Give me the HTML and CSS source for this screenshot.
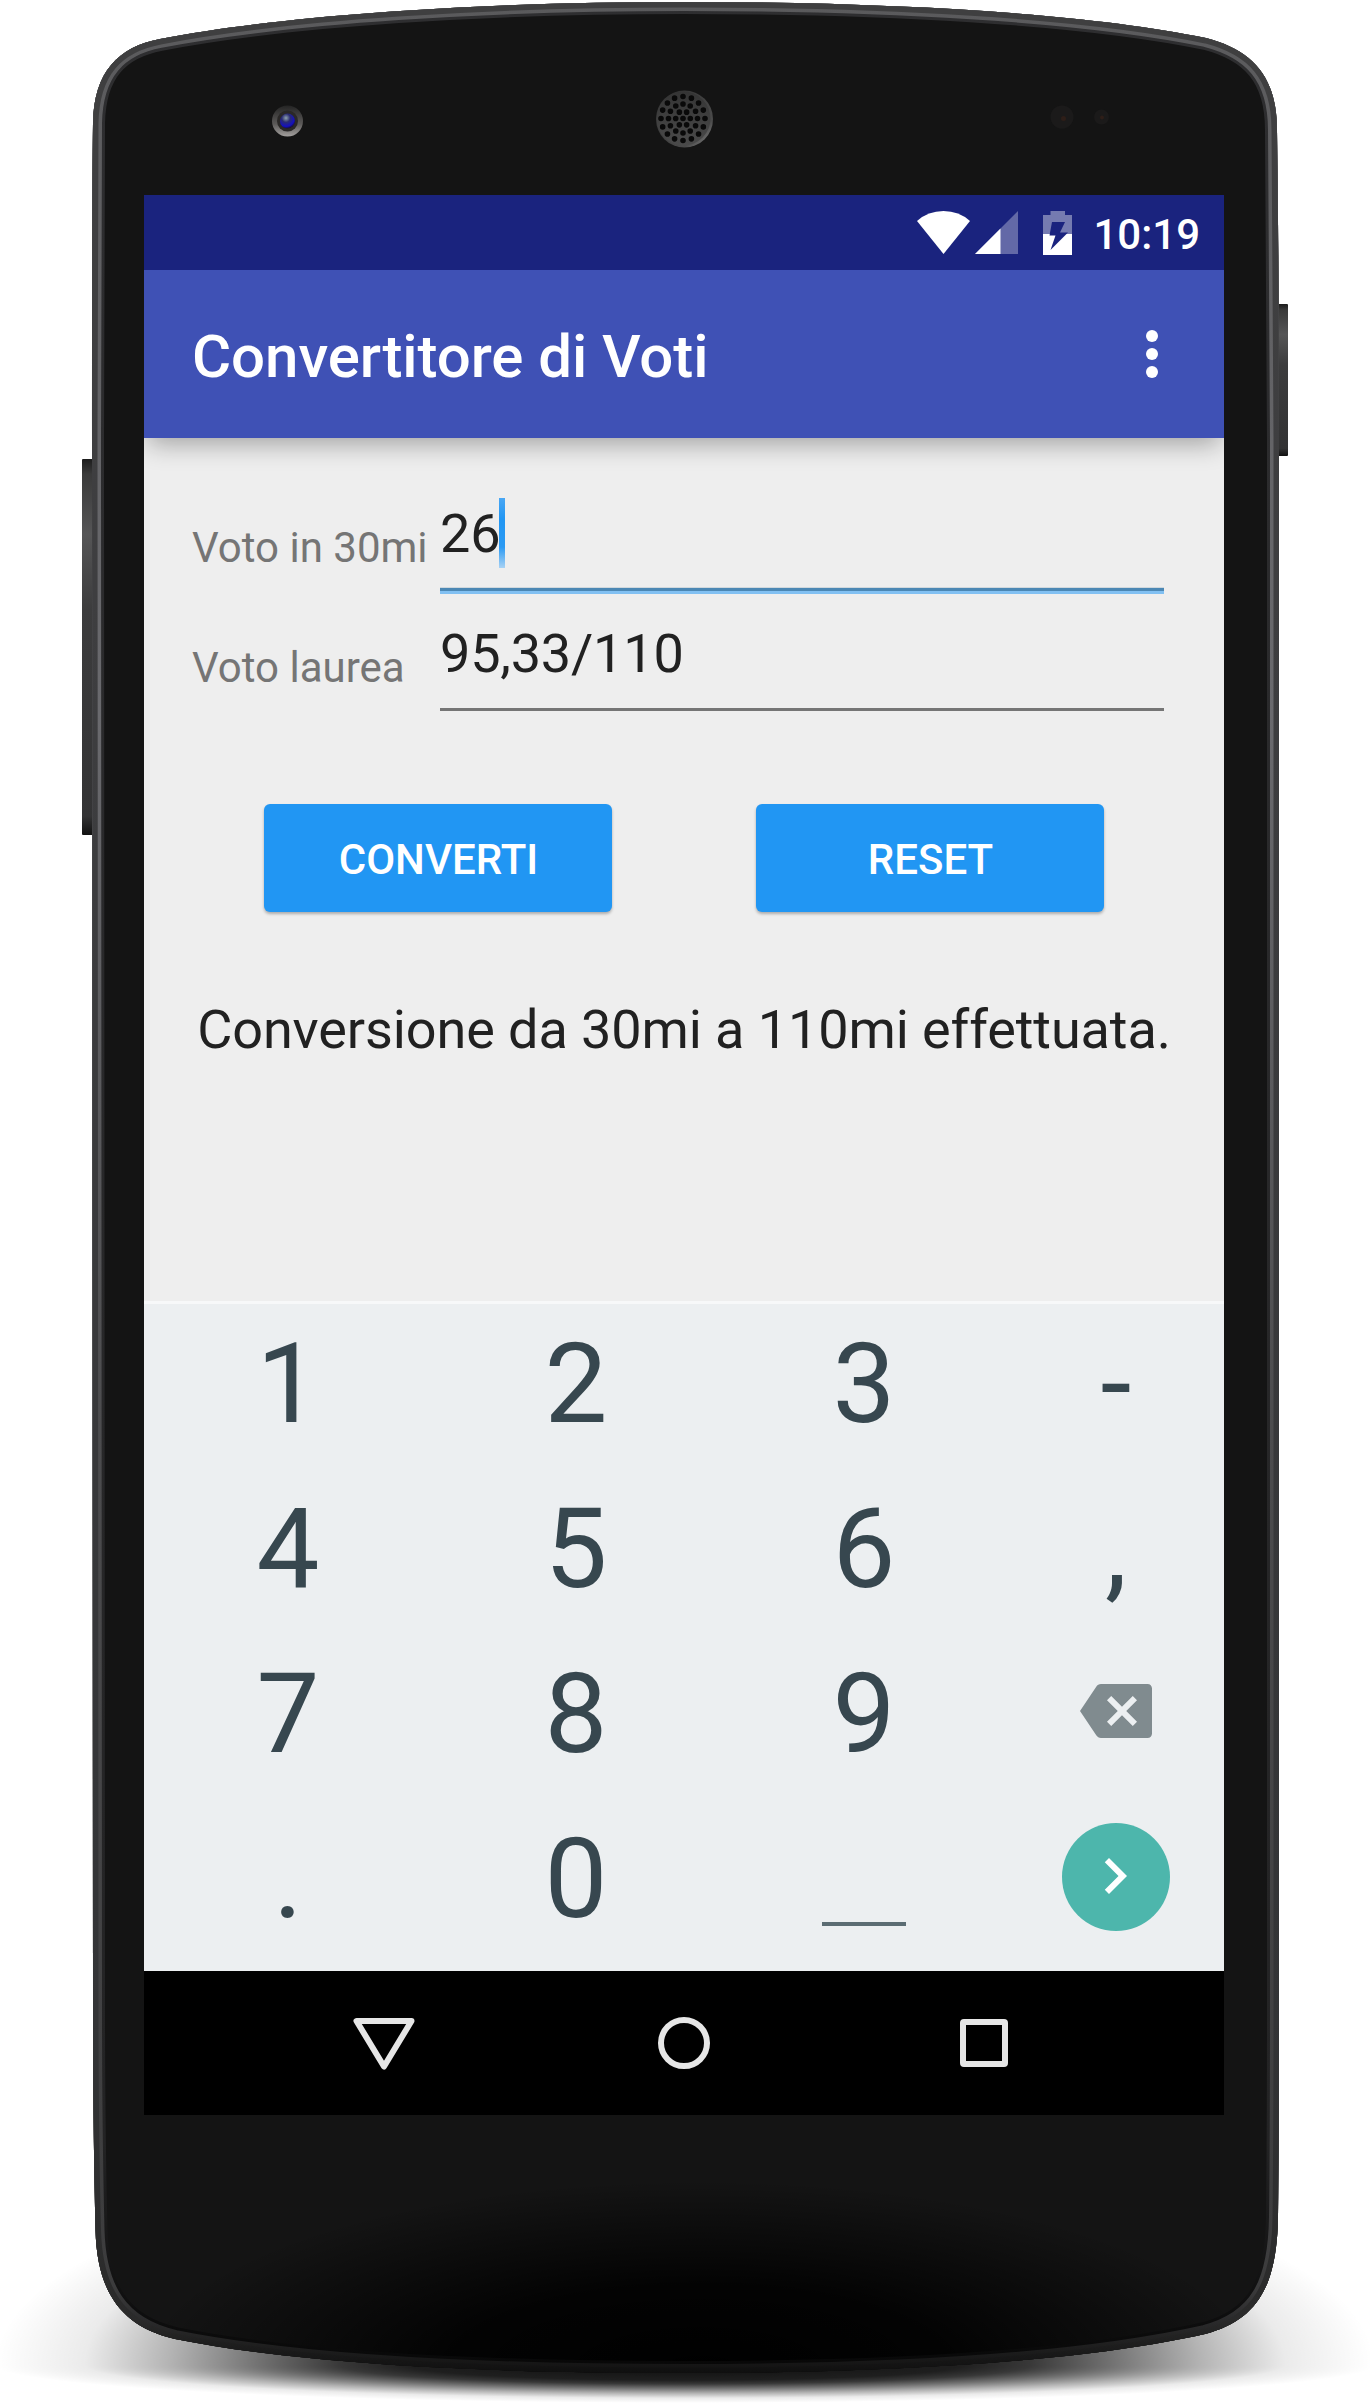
FILE: index.html
```html
<!DOCTYPE html>
<html lang="it">
<head>
<meta charset="utf-8">
<title>Convertitore di Voti</title>
<link rel="stylesheet" href="styles.css">
</head>
<body>
<div class="stage">
  <svg class="device" viewBox="0 0 1370 2405" aria-hidden="true">
    <defs>
      <radialGradient id="floor">
        <stop offset="0" stop-color="#000" stop-opacity=".95"/>
        <stop offset=".4" stop-color="#000" stop-opacity=".88"/>
        <stop offset=".5" stop-color="#000" stop-opacity=".78"/>
        <stop offset=".62" stop-color="#000" stop-opacity=".55"/>
        <stop offset=".745" stop-color="#000" stop-opacity=".3"/>
        <stop offset=".87" stop-color="#000" stop-opacity=".08"/>
        <stop offset="1" stop-color="#000" stop-opacity="0"/>
      </radialGradient>
      <radialGradient id="shade">
        <stop offset="0" stop-color="#000"/>
        <stop offset=".45" stop-color="#000" stop-opacity=".85"/>
        <stop offset="1" stop-color="#000" stop-opacity="0"/>
      </radialGradient>
      <linearGradient id="rim" gradientUnits="userSpaceOnUse" x1="0" y1="0" x2="0" y2="2380">
        <stop offset="0" stop-color="#3f3f40"/>
        <stop offset=".25" stop-color="#3e3e40"/>
        <stop offset=".85" stop-color="#333436"/>
        <stop offset=".975" stop-color="#2a2a2a"/>
        <stop offset="1" stop-color="#0c0c0c"/>
      </linearGradient>
      <linearGradient id="glint" gradientUnits="userSpaceOnUse" x1="0" y1="0" x2="0" y2="2380">
        <stop offset="0" stop-color="#5a5a5c"/>
        <stop offset=".3" stop-color="#6a6a6e"/>
        <stop offset=".6" stop-color="#4c4c4e"/>
        <stop offset=".96" stop-color="#3c3c3d"/>
        <stop offset="1" stop-color="#0e0e0e"/>
      </linearGradient>
      <linearGradient id="lip" gradientUnits="userSpaceOnUse" x1="0" y1="0" x2="0" y2="2380">
        <stop offset="0" stop-color="#2e2e30"/>
        <stop offset=".9" stop-color="#232324"/>
        <stop offset="1" stop-color="#060606"/>
      </linearGradient>
      <linearGradient id="key" x1="0" y1="0" x2="0" y2="1">
        <stop offset="0" stop-color="#1c1c1c"/>
        <stop offset=".04" stop-color="#3a3a3a"/>
        <stop offset=".2" stop-color="#555556"/>
        <stop offset=".4" stop-color="#3c3c3d"/>
        <stop offset=".95" stop-color="#333334"/>
        <stop offset="1" stop-color="#111"/>
      </linearGradient>
      <linearGradient id="ring" x1="0" y1="0" x2="0" y2="1">
        <stop offset="0" stop-color="#242424"/>
        <stop offset=".6" stop-color="#5c5a59"/>
        <stop offset="1" stop-color="#a3a09e"/>
      </linearGradient>
      <radialGradient id="lens" cx=".4" cy=".3" r=".7">
        <stop offset="0" stop-color="#8fa3ad"/>
        <stop offset=".4" stop-color="#2a2c70"/>
        <stop offset=".8" stop-color="#1410c0"/>
        <stop offset="1" stop-color="#181038"/>
      </radialGradient>
      <linearGradient id="mesh" x1="0" y1="0" x2="1" y2="1">
        <stop offset="0" stop-color="#2e2e2e"/>
        <stop offset=".75" stop-color="#4a4a4a"/>
        <stop offset="1" stop-color="#8a8a8a"/>
      </linearGradient>
      <linearGradient id="plate" x1="0" y1="0" x2="0" y2="1">
        <stop offset="0" stop-color="#343434"/>
        <stop offset="1" stop-color="#4a4a4a"/>
      </linearGradient>
      <path id="shell" d="M92 440 C92 300 92 190 93 123 C94 72 118 47 160 39 C290 14 490 2 684 2 C880 2 1080 12 1206 38 C1252 50 1277 76 1277 130 C1278 200 1279 300 1279 440 L1279 2000 Q1279 2130 1278 2217 C1277 2285 1258 2320 1205 2334 C1080 2362 890 2373 685 2373 C480 2373 300 2364 175 2339 C118 2326 97 2288 95.500 2230 Q93 2130 93 2000 Z"/>
      <clipPath id="shellClip"><use href="#shell"/></clipPath>
      <clipPath id="above"><rect x="0" y="2100" width="1370" height="265"/></clipPath>
      <clipPath id="below"><rect x="0" y="2365" width="1370" height="40"/></clipPath>
    </defs>
    <ellipse cx="685" cy="2365" rx="690" ry="215" fill="url(#floor)" clip-path="url(#above)"/>
    <ellipse cx="685" cy="2365" rx="690" ry="38" fill="url(#floor)" clip-path="url(#below)"/>
    <rect x="82" y="459" width="12" height="376" rx="1" fill="url(#key)"/>
    <rect x="1276" y="304" width="12" height="152" rx="1" fill="url(#key)"/>
    <use href="#shell" fill="#141414"/>
    <g clip-path="url(#shellClip)">
      <ellipse cx="700" cy="2370" rx="560" ry="190" fill="url(#shade)"/>
      <g fill="none">
        <use href="#shell" stroke="url(#lip)" stroke-width="24"/>
        <use href="#shell" stroke="url(#glint)" stroke-width="18"/>
        <use href="#shell" stroke="url(#rim)" stroke-width="11"/>
      </g>
    </g>
    <circle cx="287.500" cy="121" r="15.500" fill="url(#ring)"/>
    <circle cx="287.500" cy="121" r="10.500" fill="#2a2827"/>
    <circle cx="287.500" cy="121" r="7.500" fill="url(#lens)"/>
    <circle cx="684.500" cy="119" r="28.500" fill="url(#mesh)"/>
    <circle cx="683.500" cy="118.500" r="27" fill="url(#plate)"/>
    <g fill="none" stroke="#090909" stroke-width="5.600" stroke-linecap="round">
      <circle cx="683" cy="118.500" r="7.300" pathLength="6" stroke-dasharray="0 1"/>
      <circle cx="683" cy="118.500" r="14.500" pathLength="12" stroke-dasharray="0 1"/>
      <circle cx="683" cy="118.500" r="22" pathLength="16" stroke-dasharray="0 1"/>
    </g>
    <circle cx="683" cy="118.500" r="2.800" fill="#090909"/>
    <circle cx="1062" cy="117" r="11.500" fill="#1b1a1a"/>
    <circle cx="1063.500" cy="118.500" r="2.500" fill="#2e1e18"/>
    <circle cx="1101.500" cy="117" r="7.500" fill="#1b1a1a"/>
    <circle cx="1102" cy="117.500" r="2" fill="#2e1e18"/>
  </svg>

  <main class="screen">
    <header class="status">
      <svg class="wifi" viewBox="0 0 53 43"><path d="M0 10 Q11 0 26.500 0 Q42 0 53 10 L26.500 43 Z" fill="#fff"/></svg>
      <svg class="signal" viewBox="0 0 43 43"><path d="M43 0V43H0Z" fill="#fff" opacity=".32"/><path d="M25.500 17.500V43H0Z" fill="#fff"/></svg>
      <svg class="battery" viewBox="0 0 29 44">
        <path d="M7.500 0H22V4H29V23H0V4H7.500Z" fill="#fff" opacity=".4"/>
        <path d="M0 23H29V44H0Z" fill="#fff"/>
        <path d="M9 11H22L17 21.500H25L7.500 39L12.500 24.500H6.500Z" fill="#1a237e"/>
      </svg>
      <span class="clock">10:19</span>
    </header>

    <div class="appbar">
      <h1 class="title">Convertitore di Voti</h1>
      <svg class="more" viewBox="0 0 12 48" fill="#fff"><circle cx="6" cy="6" r="6"/><circle cx="6" cy="24" r="6"/><circle cx="6" cy="42" r="6"/></svg>
    </div>

    <section class="content">
      <div class="row">
        <span class="label">Voto in 30mi</span>
        <div class="field focused"><span class="value">26<i class="caret"></i></span></div>
      </div>
      <div class="row">
        <span class="label">Voto laurea</span>
        <div class="field"><span class="value">95,33/110</span></div>
      </div>
      <div class="actions">
        <button class="btn">CONVERTI</button>
        <button class="btn">RESET</button>
      </div>
      <p class="message">Conversione da 30mi a 110mi effettuata.</p>
    </section>

    <section class="keypad">
      <span class="key">1</span><span class="key">2</span><span class="key">3</span><span class="key">-</span>
      <span class="key">4</span><span class="key">5</span><span class="key">6</span><span class="key">,</span>
      <span class="key">7</span><span class="key">8</span><span class="key">9</span>
      <span class="key icon delete"><svg class="glyph" viewBox="0 0 24 24"><path fill="#808b8f" d="M22.500 3H7c-.69 0-1.230.350-1.590.880L0 12l5.410 8.110c.36.53.9.89 1.590.89h15.500c.9 0 1.500-.6 1.500-1.500v-15c0-.9-.6-1.500-1.500-1.500zM19 15.590 17.590 17 14 13.410 10.410 17 9 15.590 12.590 12 9 8.410 10.410 7 14 10.590 17.590 7 19 8.410 15.410 12 19 15.590z"/></svg></span>
      <span class="key">.</span><span class="key">0</span><span class="key space"><i class="bar"></i></span>
      <span class="key icon"><span class="go"><svg class="glyph" viewBox="0 0 24 24"><path fill="#fff" d="M10 6 8.590 7.410 13.170 12l-4.580 4.590L10 18l6-6z"/></svg></span></span>
    </section>

    <nav class="navbar">
      <svg class="nav" viewBox="0 0 64 64"><path d="M4.500 10.500H59.500L32 56Z" transform="translate(0 -.5)"/></svg>
      <svg class="nav" viewBox="0 0 64 64"><circle cx="32" cy="32" r="23"/></svg>
      <svg class="nav" viewBox="0 0 64 64"><rect x="11" y="11" width="42" height="42" rx="1"/></svg>
    </nav>
  </main>
</div>
</body>
</html>
```
FILE: styles.css
```css
* { box-sizing: border-box; }

body {
  margin: 0;
  background: #fff;
  font-family: Roboto, "Liberation Sans", sans-serif;
  color: #212121;
}

.stage {
  position: relative;
  width: 1370px;
  height: 2405px;
  padding: 195px 146px 0 144px;
  overflow: hidden;
}

.device {
  position: absolute;
  inset: 0;
  width: 1370px;
  height: 2405px;
}

.screen {
  position: relative;
  display: flex;
  flex-direction: column;
  width: 1080px;
  height: 1920px;
  background: #eee;
  overflow: hidden;
}

.status {
  position: relative;
  z-index: 1;
  display: flex;
  align-items: center;
  justify-content: flex-end;
  height: 75px;
  padding-right: 24px;
  background: #1a237e;
}

.wifi { width: 53px; height: 43px; margin-right: 5px; }
.signal { width: 43px; height: 43px; margin-right: 25px; }
.battery { width: 29px; height: 44px; margin-right: 21px; }

.clock {
  padding-top: .1em;
  font-size: 42px;
  font-weight: 500;
  line-height: 50px;
  color: #fff;
}

.appbar {
  position: relative;
  display: flex;
  align-items: center;
  justify-content: space-between;
  height: 168px;
  padding: 0 66px 0 48px;
  background: #3f51b5;
  box-shadow: 0 10px 24px -4px rgba(0, 0, 0, .32);
  color: #fff;
}

.title {
  margin: 0;
  padding-top: .1em;
  font-size: 60px;
  font-weight: 500;
  line-height: 72px;
  letter-spacing: -.07px;
}

.more { width: 12px; height: 48px; }

.content {
  flex: 1;
  padding: 36px 60px 0 48px;
}

.row {
  display: grid;
  grid-template-columns: 248px 724px;
  height: 120px;
}

.label {
  padding-top: 49px;
  font-size: 42px;
  line-height: 50px;
  color: #757575;
  white-space: nowrap;
}

.field {
  padding-top: 25px;
  background: linear-gradient(#757575, #757575) 0 114px / 100% 3px no-repeat;
}

.field.focused {
  background: linear-gradient(#d0d8dd 0 1px, #4b87b4 1px 4px, #81c0f2 4px) 0 113px / 100% 7px no-repeat;
}

.value {
  display: flex;
  align-items: flex-start;
  font-size: 54px;
  line-height: 70px;
  letter-spacing: -.2px;
}

.caret {
  width: 6px;
  height: 70px;
  margin: -1px 0 0 -1.500px;
  background: linear-gradient(#49a7f4, #2196f3 30%, #2b9af3 70%, #a8d2f4);
}

.actions {
  display: flex;
  gap: 144px;
  padding: 90px 0 0 72px;
}

.btn {
  width: 348px;
  height: 108px;
  padding: 4px 0 0 1px;
  border: 0;
  border-radius: 6px;
  background: #2196f3;
  box-shadow: 0 2px 3px rgba(0, 0, 0, .28);
  color: #fff;
  font: 500 42px/50px Roboto, "Liberation Sans", sans-serif;
}

.message {
  margin: 85px -12px 0 0;
  font-size: 54px;
  line-height: 66px;
  letter-spacing: -.1px;
  text-align: center;
  white-space: nowrap;
}

.keypad {
  display: grid;
  grid-template-columns: 288px 288px 288px 216px;
  grid-template-rows: repeat(4, 165px);
  height: 670px;
  background: #eceff1;
  box-shadow: inset 0 3px #f7f8f9;
}

.key {
  font-size: 112px;
  line-height: 165px;
  text-align: center;
  color: #37474f;
}

.key.icon {
  display: flex;
  align-items: center;
  justify-content: center;
  padding-bottom: 4px;
}

.key.delete { padding-bottom: 6px; }

.glyph { width: 72px; height: 72px; }

.go {
  display: flex;
  align-items: center;
  justify-content: center;
  width: 108px;
  height: 108px;
  padding: 0 2px 1px 0;
  border-radius: 50%;
  background: #4db6ac;
}

.key.space {
  display: flex;
  align-items: flex-end;
  justify-content: center;
  padding-bottom: 35px;
}

.bar { width: 84px; height: 4px; background: #5b6c73; }

.navbar {
  display: flex;
  align-items: center;
  justify-content: center;
  gap: 236px;
  height: 144px;
  background: #000;
}

.nav {
  width: 64px;
  height: 64px;
  fill: none;
  stroke: #e6e6e6;
  stroke-width: 6;
  stroke-linejoin: round;
}
```
